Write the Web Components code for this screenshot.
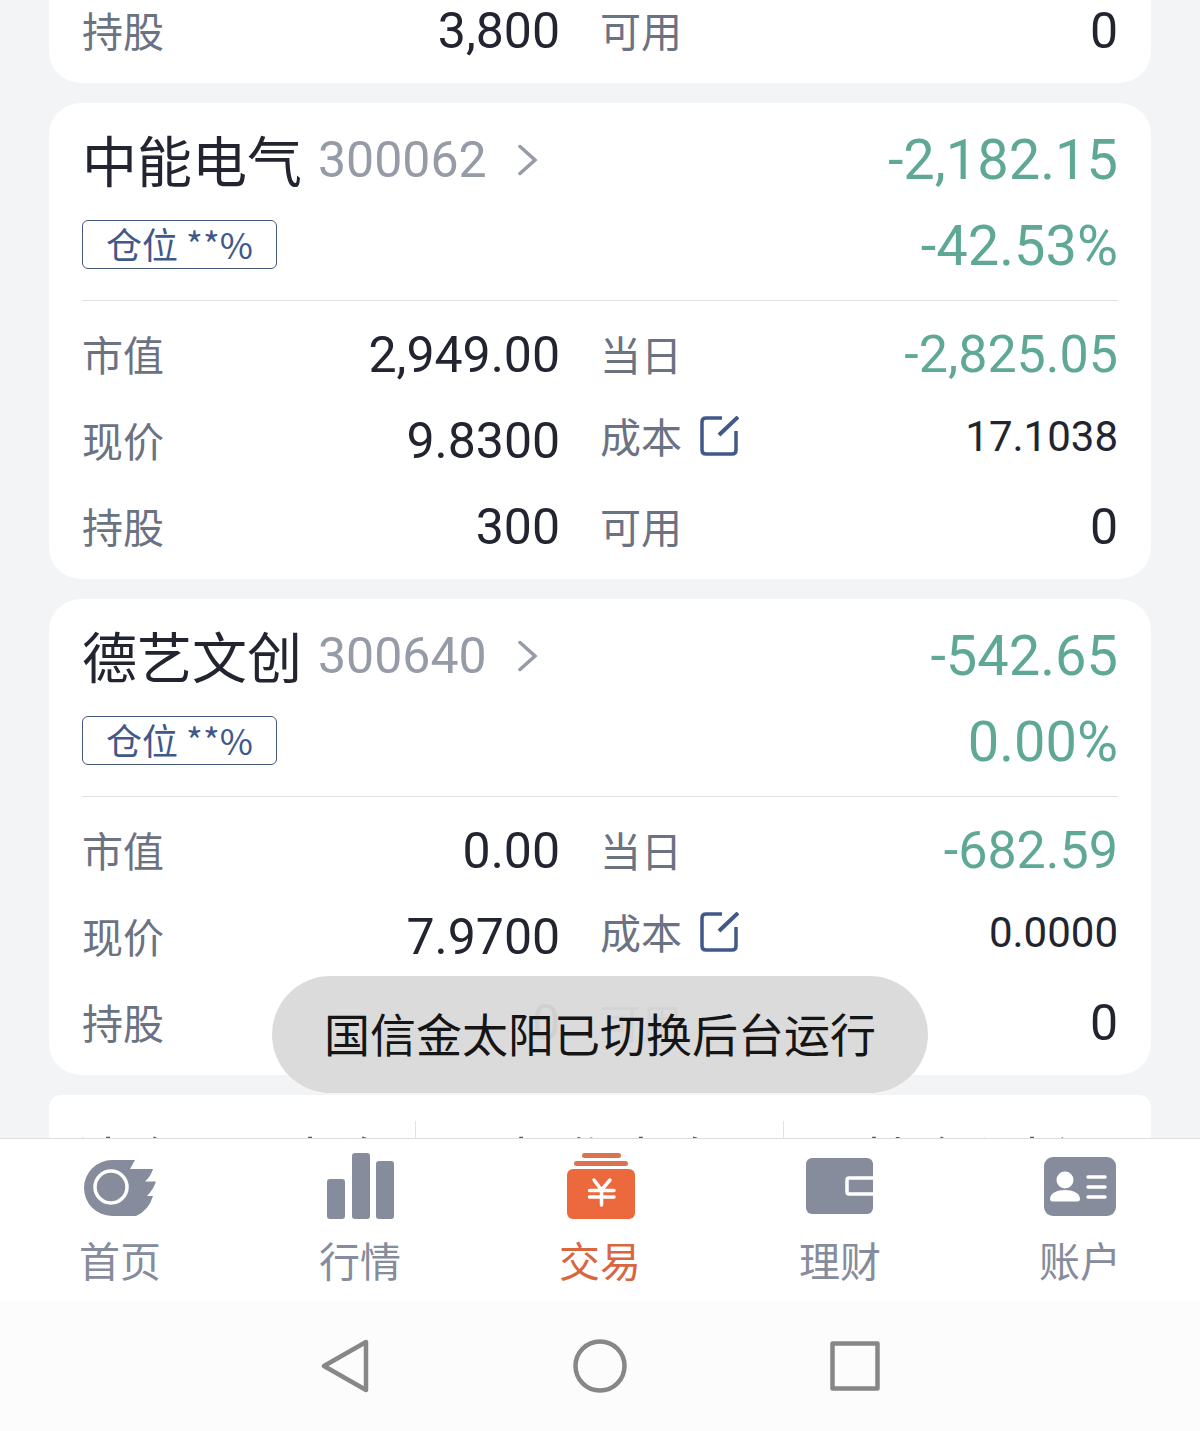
<!DOCTYPE html>
<html lang="zh-CN">
<head>
<meta charset="utf-8">
<meta name="viewport" content="width=device-width, initial-scale=1">
<title>持仓</title>
<style>
  html, body {
    background: #f3f4f6;
    font-family: "Noto Sans CJK SC", sans-serif;
    height: 100%;
    margin: 0;
  }
</style>
</head>
<body>

<trade-app>
  <stock-card partial>
    <stock-field label="持股">3,800</stock-field>
    <stock-field label="可用">0</stock-field>
  </stock-card>

  <stock-card name="中能电气" code="300062" profit="-2,182.15" rate="-42.53%">
    <stock-field label="市值">2,949.00</stock-field>
    <stock-field label="当日" tone="down">-2,825.05</stock-field>
    <stock-field label="现价">9.8300</stock-field>
    <stock-field label="成本" tone="small" editable>17.1038</stock-field>
    <stock-field label="持股">300</stock-field>
    <stock-field label="可用">0</stock-field>
  </stock-card>

  <stock-card name="德艺文创" code="300640" profit="-542.65" rate="0.00%">
    <stock-field label="市值">0.00</stock-field>
    <stock-field label="当日" tone="down">-682.59</stock-field>
    <stock-field label="现价">7.9700</stock-field>
    <stock-field label="成本" tone="small" editable>0.0000</stock-field>
    <stock-field label="持股">0</stock-field>
    <stock-field label="可用">0</stock-field>
  </stock-card>

  <quick-links>
    <a href="#closed">清仓股票查询</a>
    <a href="#operations">T操作查询</a>
    <a href="#analysis">持仓分析</a>
  </quick-links>

  <toast-message slot="toast">国信金太阳已切换后台运行</toast-message>

  <tab-bar slot="footer">
    <tab-item icon="home" href="#home">首页</tab-item>
    <tab-item icon="market" href="#market">行情</tab-item>
    <tab-item icon="trade" href="#trade" active>交易</tab-item>
    <tab-item icon="wealth" href="#wealth">理财</tab-item>
    <tab-item icon="account" href="#account">账户</tab-item>
  </tab-bar>
  <system-bar slot="footer"></system-bar>
</trade-app>

<script>
class TradeApp extends HTMLElement {

  constructor() {
    super();
    this.attachShadow({mode: 'open'}).innerHTML =
      `<style>
        :host {
          display: flex;
          flex-direction: column;
          height: 100vh;
          overflow: hidden;
          position: relative;
        }
        main {
          display: flex;
          flex: 1;
          flex-direction: column;
          gap: 20px;
          /* the list is scrolled part of the way into its first card */
          margin-top: -12px;
          min-height: 0;
          overflow: hidden;
          padding: 0 49px;
        }
      </style>
      <main><slot></slot></main>
      <slot name="toast"></slot>
      <slot name="footer"></slot>`;
  }
}

class StockCard extends HTMLElement {

  constructor() {
    super();
    this.attachShadow({mode: 'open'});
  }

  connectedCallback() {
    this.shadowRoot.innerHTML =
      `<style>
        :host {
          background: #fff;
          border-radius: 32px;
          display: block;
          flex: none;
          padding: 14px 33px 9px;
        }
        :host([partial]) {
          border-radius: 0 0 32px 32px;
          padding-top: 0;
        }
        header {
          border-bottom: 1px solid #dfe1e4;
          margin-bottom: 11px;
          padding-bottom: 11px;
        }
        .line {
          align-items: center;
          display: flex;
          height: 86px;
          justify-content: space-between;
        }
        a {
          align-items: center;
          color: #22252f;
          display: flex;
          text-decoration: none;
        }
        h2 {
          font-size: 55px;
          font-weight: 400;
          line-height: 82px;
          margin: 0 16px 0 0;
          padding-bottom: 4px;
        }
        .code {
          color: #959ba7;
          font: 50px/86px Roboto, sans-serif;
          margin-right: 31px;
        }
        .badge {
          border: 1px solid #46597a;
          border-radius: 6px;
          box-sizing: border-box;
          color: #40588a;
          font-size: 36px;
          height: 49px;
          line-height: 45px;
          margin-bottom: 4px;
          padding: 0 23px;
        }
        .figure {
          color: #5fa895;
          font: 56px/86px Roboto, sans-serif;
        }
        .fields {
          column-gap: 40px;
          display: grid;
          grid-template-columns: 12fr 13fr;
        }
      </style>
      ${this.hasAttribute('partial') ? '' : this._header()}
      <div class="fields"><slot></slot></div>`;
  }

  _header() {
    return `<header>
      <div class="line">
        <a href="#${this.getAttribute('code')}">
          <h2>${this.getAttribute('name')}</h2>
          <span class="code">${this.getAttribute('code')}</span>
          <svg width="20" height="32" viewBox="0 0 20 32" fill="none" stroke="#959ba7" stroke-width="3.500" stroke-linecap="round" aria-hidden="true">
            <path d="M2 2.500L17 16L2 29.500"/>
          </svg>
        </a>
        <span class="figure">${this.getAttribute('profit')}</span>
      </div>
      <div class="line">
        <span class="badge">仓位 **%</span>
        <span class="figure">${this.getAttribute('rate')}</span>
      </div>
    </header>`;
  }
}

class StockField extends HTMLElement {

  constructor() {
    super();
    this.attachShadow({mode: 'open'});
  }

  connectedCallback() {
    this.shadowRoot.innerHTML =
      `<style>
        :host {
          align-items: center;
          color: #22252f;
          display: flex;
          height: 86px;
        }
        .label {
          color: #6b7282;
          font-size: 41px;
          line-height: 60px;
          padding-bottom: 4px;
        }
        .value {
          flex: 1;
          font: 50px/60px Roboto, sans-serif;
          text-align: right;
        }
        :host([tone="down"]) .value {
          color: #5fa895;
          font-size: 52px;
        }
        :host([tone="small"]) {
          height: 78px;
        }
        :host([tone="small"]) .value {
          font-size: 42px;
        }
        button {
          background: none;
          border: 0;
          display: flex;
          margin: 0 0 2px 17px;
          padding: 0;
        }
      </style>
      <span class="label">${this.getAttribute('label')}</span>
      ${this.hasAttribute('editable') ? this._editButton() : ''}
      <span class="value"><slot></slot></span>`;
  }

  _editButton() {
    return `<button type="button" aria-label="修改成本">
      <svg width="40" height="40" viewBox="0 0 40 40" fill="none" stroke="#40588a" stroke-width="3.500">
        <path d="M23 2H7Q3 2 3 6V34Q3 38 7 38H33Q37 38 37 34V15"/>
        <path d="M20 19L39 1" stroke-width="4"/>
      </svg>
    </button>`;
  }
}

class QuickLinks extends HTMLElement {

  constructor() {
    super();
    this.attachShadow({mode: 'open'}).innerHTML =
      `<style>
        :host {
          background: #fff;
          border-radius: 12px;
          display: grid;
          flex: none;
          grid-template-columns: repeat(3, 1fr);
          padding: 26px 0;
        }
        ::slotted(a) {
          color: #46597a;
          font-size: 52px;
          line-height: 76px;
          text-align: center;
          text-decoration: none;
        }
        ::slotted(a:not(:last-child)) {
          border-right: 1px solid #dfe1e4;
        }
      </style>
      <slot></slot>`;
  }
}

class ToastMessage extends HTMLElement {

  constructor() {
    super();
    this.attachShadow({mode: 'open'}).innerHTML =
      `<style>
        :host {
          background: rgba(217, 217, 217, .95);
          border-radius: 59px;
          bottom: 338px;
          color: #151515;
          font-size: 46px;
          left: 50%;
          line-height: 113px;
          padding: 0 52px 4px;
          position: absolute;
          transform: translateX(-50%);
          white-space: nowrap;
        }
      </style>
      <slot></slot>`;
  }

  connectedCallback() {
    this.setAttribute('role', 'status');
  }
}

class TabBar extends HTMLElement {

  constructor() {
    super();
    this.attachShadow({mode: 'open'}).innerHTML =
      `<style>
        :host {
          background: #fff;
          border-top: 1px solid #dcdee1;
          display: block;
          flex: none;
        }
        nav {
          display: grid;
          grid-template-columns: repeat(5, 1fr);
        }
      </style>
      <nav><slot></slot></nav>`;
  }
}

const TAB_ICONS = {
  home:
    `<path fill="currentColor" d="M28 8H51L46 17H69Q67 24 61 29.500H72Q69 38 63 44H69Q65 58 52 64H28A28 28 0 0 1 28 8Z"/>
    <circle cx="27" cy="35" r="16" fill="none" stroke="#fff" stroke-width="3.500"/>`,
  market:
    `<g fill="currentColor">
      <rect x="3" y="27" width="18" height="40" rx="3"/>
      <rect x="28" y="1" width="18" height="66" rx="3"/>
      <rect x="52" y="9" width="18" height="58" rx="3"/>
    </g>`,
  trade:
    `<g fill="#db7250">
      <rect x="18" y="1" width="39" height="5" rx="2.500"/>
      <rect x="10" y="9" width="54" height="5" rx="2.500"/>
    </g>
    <rect x="3" y="17" width="68" height="50" rx="6" fill="#eb693c"/>
    <path fill="none" stroke="#fff" stroke-width="3.500" stroke-linecap="round" d="M30 28L37.500 38L46 28M25.500 38.500H50M25.500 45H50M37.500 38V53"/>`,
  wealth:
    `<rect x="2" y="6" width="67" height="56" rx="6" fill="currentColor"/>
    <path fill="none" stroke="#fff" stroke-width="3.500" d="M70 26H45Q43 26 43 28V40Q43 42 45 42H70"/>`,
  account:
    `<rect x="0" y="5" width="72" height="59" rx="9" fill="currentColor"/>
    <circle cx="21" cy="28" r="8.500" fill="#fff"/>
    <path fill="#fff" d="M6 47C6 35 36 35 36 47Q36 49.500 33 49.500H9Q6 49.500 6 47Z"/>
    <path stroke="#fff" stroke-width="3.500" stroke-linecap="round" d="M44 25H61M44 35H61M44 45H61"/>`
};

class TabItem extends HTMLElement {

  constructor() {
    super();
    this.attachShadow({mode: 'open'});
  }

  connectedCallback() {
    this.shadowRoot.innerHTML =
      `<style>
        :host {
          color: #868c9c;
          display: block;
        }
        :host([active]) {
          color: #d8673f;
        }
        a {
          align-items: center;
          color: inherit;
          display: flex;
          flex-direction: column;
          font-size: 41px;
          gap: 6px;
          line-height: 60px;
          padding: 13px 0 12px;
          text-decoration: none;
        }
      </style>
      <a href="${this.getAttribute('href')}">
        <svg width="72" height="71" viewBox="0 0 72 71" aria-hidden="true">${TAB_ICONS[this.getAttribute('icon')]}</svg>
        <slot></slot>
      </a>`;
  }
}

class SystemBar extends HTMLElement {

  constructor() {
    super();
    this.attachShadow({mode: 'open'}).innerHTML =
      `<style>
        :host {
          background: #fcfcfc;
          display: flex;
          flex: none;
          gap: 199px;
          height: 130px;
          justify-content: center;
        }
        button {
          align-items: center;
          background: none;
          border: 0;
          display: flex;
          padding: 0;
        }
        svg {
          fill: none;
          stroke: #878787;
          stroke-linejoin: round;
          stroke-width: 4.500;
        }
      </style>
      <button type="button" aria-label="返回">
        <svg width="56" height="56" viewBox="0 0 56 56"><path d="M49 4V52L7 28Z"/></svg>
      </button>
      <button type="button" aria-label="主屏幕">
        <svg width="56" height="56" viewBox="0 0 56 56"><circle cx="28" cy="28" r="24.500"/></svg>
      </button>
      <button type="button" aria-label="最近任务">
        <svg width="56" height="56" viewBox="0 0 56 56"><rect x="5.500" y="5.500" width="45" height="45"/></svg>
      </button>`;
  }
}

window.customElements.define('trade-app', TradeApp);
window.customElements.define('stock-card', StockCard);
window.customElements.define('stock-field', StockField);
window.customElements.define('quick-links', QuickLinks);
window.customElements.define('toast-message', ToastMessage);
window.customElements.define('tab-bar', TabBar);
window.customElements.define('tab-item', TabItem);
window.customElements.define('system-bar', SystemBar);
</script>

</body>
</html>
